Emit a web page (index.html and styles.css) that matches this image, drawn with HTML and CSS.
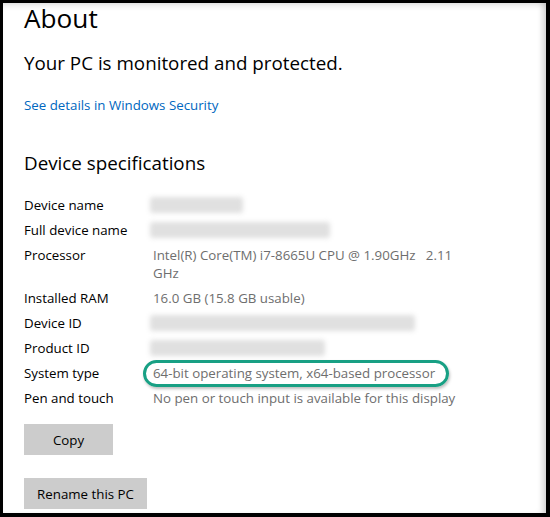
FILE: index.html
```html
<!DOCTYPE html>
<html>
<head>
<meta charset="utf-8">
<link rel="stylesheet" href="styles.css">
</head>
<body>
<div class="frame">
  <div class="content">
    <h1 class="title">About</h1>
    <p class="status">Your PC is monitored and protected.</p>
    <a class="link" href="#">See details in Windows Security</a>
    <h2 class="section">Device specifications</h2>
    <div class="specs">
      <div class="label">Device name</div>
      <div class="value"><span class="blur w93"></span></div>
      <div class="label">Full device name</div>
      <div class="value"><span class="blur w180"></span></div>
      <div class="label">Processor</div>
      <div class="value">Intel(R) Core(TM) i7-8665U CPU @ 1.90GHz&nbsp;&nbsp; 2.11<br>GHz</div>
      <div class="label">Installed RAM</div>
      <div class="value">16.0 GB (15.8 GB usable)</div>
      <div class="label">Device ID</div>
      <div class="value"><span class="blur w265"></span></div>
      <div class="label">Product ID</div>
      <div class="value"><span class="blur w175"></span></div>
      <div class="label">System type</div>
      <div class="value"><span class="highlight">64-bit operating system, x64-based processor</span></div>
      <div class="label">Pen and touch</div>
      <div class="value">No pen or touch input is available for this display</div>
    </div>
    <button class="btn copy">Copy</button>
    <button class="btn rename">Rename this PC</button>
  </div>
</div>
</body>
</html>
```
FILE: styles.css
```css
html, body {
  margin: 0;
  padding: 0;
  background: #fff;
}
.frame {
  box-sizing: border-box;
  width: 550px;
  height: 517px;
  border-style: solid;
  border-color: #000;
  border-width: 3px 4px 4px 3px;
  box-shadow: inset -6px 0 6px -3px rgba(0,0,0,0.18), inset 0 6px 6px -4px rgba(0,0,0,0.12);
  overflow: hidden;
  font-family: "Segoe UI", "Open Sans", sans-serif;
  color: #000;
}
.content {
  padding-left: 21px;
  display: flex;
  flex-direction: column;
  align-items: flex-start;
}
.title {
  margin: 1px 0 0;
  font-size: 26.2px;
  font-weight: 400;
  line-height: 28px;
}
.status {
  margin: 18px 0 0;
  font-size: 18.8px;
  line-height: 26px;
}
.link {
  margin-top: 19px;
  font-size: 13.3px;
  line-height: 20px;
  color: #0067c0;
  text-decoration: none;
}
.section {
  margin: 35px 0 0;
  font-size: 18.8px;
  font-weight: 400;
  line-height: 26px;
}
.specs {
  margin-top: 20px;
  display: grid;
  grid-template-columns: 129px 320px;
  row-gap: 7px;
  font-size: 13.3px;
  line-height: 18px;
  white-space: nowrap;
}
.label { color: #000; }
.value { color: #6e6e6e; }
.blur {
  display: block;
  height: 16px;
  margin: 1px 0 0 -3px;
  background: #e0e0e0;
  filter: blur(2.5px);
  border-radius: 3px;
}
.w93 { width: 93px; }
.w180 { width: 180px; }
.w265 { width: 265px; }
.w175 { width: 175px; }
.highlight {
  position: relative;
}
.highlight::after {
  content: "";
  position: absolute;
  left: -10px;
  right: -14px;
  top: -4px;
  bottom: -5px;
  border: 3px solid #18a084;
  border-radius: 14px;
  box-shadow: 1px 2px 3px rgba(0,0,0,0.25);
}
.btn {
  font-family: inherit;
  font-size: 13.3px;
  color: #000;
  background: #cccccc;
  border: none;
  padding: 0;
  height: 31px;
}
.copy {
  margin-top: 17px;
  width: 89px;
}
.rename {
  margin-top: 23px;
  width: 123px;
}
```
